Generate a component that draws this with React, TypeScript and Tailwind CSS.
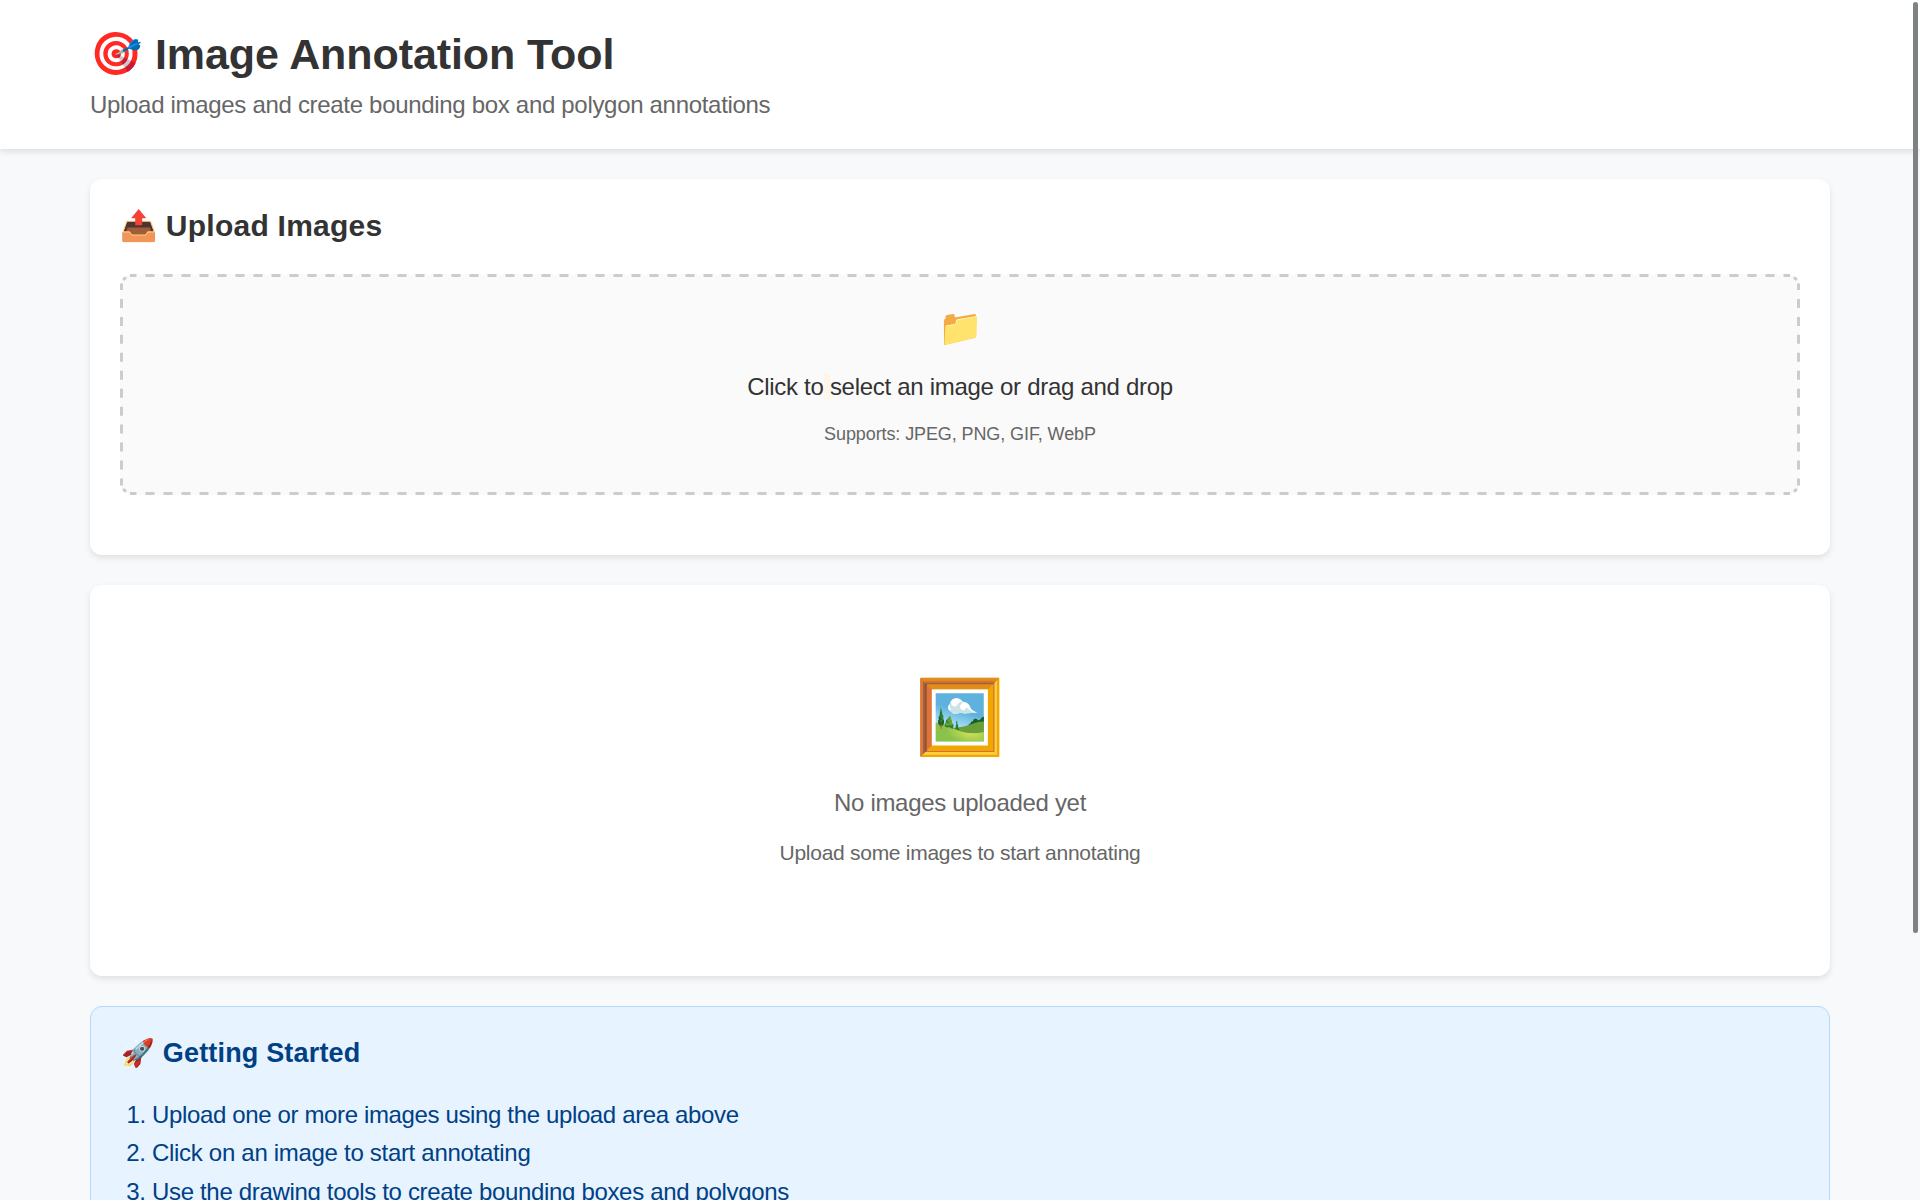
const steps = [
  { text: 'Upload one or more images using the upload area above', tracking: 'tracking-[-0.36px]' },
  { text: 'Click on an image to start annotating', tracking: 'tracking-[-0.3px]' },
  { text: 'Use the drawing tools to create bounding boxes and polygons', tracking: 'tracking-[-0.33px]' },
];

const card = 'rounded-[12px] bg-white shadow-[0_3px_6px_rgba(0,0,0,0.1)]';

function DashedOutline() {
  return (
    <svg
      className="pointer-events-none absolute inset-0"
      width="1680"
      height="221"
      viewBox="0 0 1680 221"
      fill="none"
      stroke="#ccc"
      strokeWidth="3"
      aria-hidden="true"
    >
      <path d="M10 1.5H1670M10 219.5H1670" strokeDasharray="9 9" strokeDashoffset="2.5" />
      <path d="M1.5 9.5V211.5M1678.5 9.5V211.5" strokeDasharray="9 8.95" strokeDashoffset="2.5" />
      <path d="M3.2 6L6 3.2M1674 3.2L1676.8 6M3.2 215L6 217.8M1674 217.8L1676.8 215" />
    </svg>
  );
}

export default function App() {
  return (
    <div className="relative h-[1200px] overflow-hidden bg-[#f8f9fa] font-['Liberation_Sans',sans-serif] text-[24px] leading-[28px] text-[#333]">
      <header className="h-[149px] bg-white px-[90px] pt-[30px] shadow-[0_3px_6px_rgba(0,0,0,0.1)]">
        <h1 className="flex h-[48px] text-[42px] leading-[48px] font-bold whitespace-nowrap">
          <span className="mr-[13px]">🎯</span>
          <span className="text-[43px] tracking-[-0.08px]">Image Annotation Tool</span>
        </h1>
        <p className="mt-[13px] tracking-[-0.31px] text-[#666]">
          Upload images and create bounding box and polygon annotations
        </p>
      </header>
      <main className="flex flex-col gap-[30px] px-[90px] pt-[30px]">
        <section className={`h-[376px] p-[30px] ${card}`}>
          <h2 className="h-[34px] text-[30px] leading-[34px] font-bold tracking-[0.25px]">📤 Upload Images</h2>
          <div className="relative mt-[31px] flex h-[221px] flex-col items-center rounded-[12px] bg-[#fafafa] pt-[33px]">
            <DashedOutline />
            <div className="h-[42px] text-[36px] leading-[42px]">📁</div>
            <p className="mt-[24px] tracking-[-0.29px]">
              Click to<span className="bg-[#fff5eb]"> </span>select an image or drag and drop
            </p>
            <p className="mt-[22px] text-[18px] leading-[22px] tracking-[-0.1px] text-[#666]">
              Supports: JPEG, PNG, GIF, WebP
            </p>
          </div>
        </section>
        <section className={`flex h-[391px] flex-col items-center pt-[91px] text-[#666] ${card}`}>
          <div className="h-[83px] text-[72px] leading-[83px]">🖼️</div>
          <p className="mt-[30px] tracking-[-0.31px]">No images uploaded yet</p>
          <p className="mt-[24px] text-[21px] leading-[24px] tracking-[-0.27px]">Upload some images to start annotating</p>
        </section>
        <section className="h-[340px] rounded-[12px] border border-[#b3d9ff] bg-[#e7f3ff] px-[30px] pt-[31px] text-[#004085]">
          <h3 className="h-[30px] text-[27px] leading-[30px] font-bold tracking-[0.17px]">🚀 Getting Started</h3>
          <ol className="mt-[28px] list-decimal pl-[31px] leading-[38.4px]">
            {steps.map((s) => (
              <li key={s.text} className={s.tracking}>{s.text}</li>
            ))}
          </ol>
        </section>
      </main>
      <div className="absolute top-[2px] right-[2px] h-[931px] w-[5px] rounded-full bg-[#7f8282]" />
    </div>
  );
}
